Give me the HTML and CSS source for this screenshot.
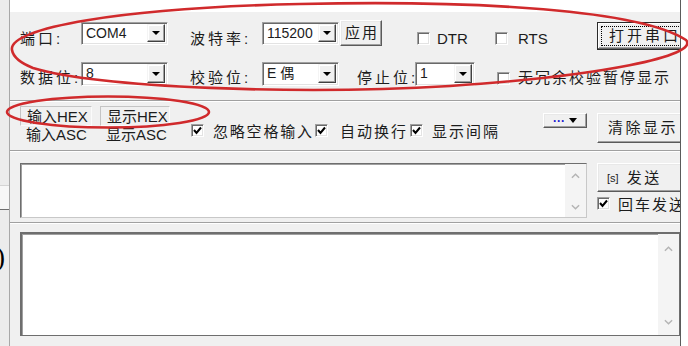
FILE: index.html
```html
<!DOCTYPE html>
<html>
<head>
<meta charset="utf-8">
<link rel="stylesheet" href="styles.css">
</head>
<body>
<div class="page">
  <div class="side">
    <div class="side-band"></div>
    <div class="paren">)</div>
  </div>
  <div class="win">
    <div class="topband"></div>

    <div class="row r1">
      <span class="lab w61">端口:</span>
      <div class="combo w87"><span class="val">COM4</span><span class="drop"><i></i></span></div>
      <span class="lab w72 ml22">波特率:</span>
      <div class="combo w77"><span class="val">115200</span><span class="drop"><i></i></span></div>
      <div class="btn apply">应用</div>
      <span class="chk ml35"></span>
      <span class="lat dtr">DTR</span>
      <span class="chk"></span>
      <span class="lat rts">RTS</span>
      <div class="btn open"><span class="focus">打开串口</span></div>
    </div>

    <div class="row r2">
      <span class="lab w61">数据位:</span>
      <div class="combo w87"><span class="val">8</span><span class="drop"><i></i></span></div>
      <span class="lab w72 ml22">校验位:</span>
      <div class="combo w77"><span class="val">E 偶</span><span class="drop"><i></i></span></div>
      <span class="lab w58 ml18">停止位:</span>
      <div class="combo w60"><span class="val">1</span><span class="drop"><i></i></span></div>
      <span class="chk ml22"></span>
      <span class="lab2 nocheck">无冗余校验暂停显示</span>
    </div>

    <div class="sep"></div>

    <div class="row r3">
      <div class="hexgrp">
        <div class="hexrow">
          <span class="hexbtn w72">输入HEX</span>
          <span class="hexbtn w70">显示HEX</span>
        </div>
        <div class="ascrow">
          <span class="asc1">输入ASC</span>
          <span>显示ASC</span>
        </div>
      </div>
      <span class="chk on"><svg viewBox="0 0 11 11"><polyline points="2,5 4.5,8 9,2.5"/></svg></span>
      <span class="lab2 opt1">忽略空格输入</span>
      <span class="chk on"><svg viewBox="0 0 11 11"><polyline points="2,5 4.5,8 9,2.5"/></svg></span>
      <span class="lab2 opt2">自动换行</span>
      <span class="chk on"><svg viewBox="0 0 11 11"><polyline points="2,5 4.5,8 9,2.5"/></svg></span>
      <span class="lab2 opt3">显示间隔</span>
      <div class="btn more"><span class="dots">···</span><i class="tri"></i></div>
      <div class="btn clear">清除显示</div>
    </div>

    <div class="sep"></div>

    <div class="row r4">
      <div class="textbox sendbox">
        <div class="area"></div>
        <div class="sbar">
          <svg viewBox="0 0 10 6"><polyline points="1,5 5,1 9,5"/></svg>
          <svg viewBox="0 0 10 6"><polyline points="1,1 5,5 9,1"/></svg>
        </div>
      </div>
      <div class="sendcol">
        <div class="btn send"><span class="hot">[s]</span>发送</div>
        <div class="crrow">
          <span class="chk on"><svg viewBox="0 0 11 11"><polyline points="2,5 4.5,8 9,2.5"/></svg></span>
          <span class="lab2 cr">回车发送</span>
        </div>
      </div>
    </div>

    <div class="sep sep2"></div>

    <div class="row r5">
      <div class="textbox recvbox">
        <div class="area"></div>
        <div class="sbar">
          <svg viewBox="0 0 10 6"><polyline points="1,5 5,1 9,5"/></svg>
          <svg viewBox="0 0 10 6"><polyline points="1,1 5,5 9,1"/></svg>
        </div>
      </div>
    </div>
  </div>
</div>

<svg class="marks" viewBox="0 0 688 346" width="688" height="346">
  <path d="M 12 50 C 8 28, 120 8, 300 4 C 480 0, 640 10, 686 40 C 700 56, 600 76, 450 86 C 300 95, 100 88, 33 68 C 18 62, 13 56, 12 50 Z"/>
  <ellipse cx="108" cy="112" rx="101" ry="15.5"/>
</svg>
</body>
</html>
```

FILE: styles.css
```css
* { box-sizing: border-box; }

body {
  margin: 0;
  width: 688px;
  height: 346px;
  overflow: hidden;
  background: #fff;
  position: relative;
  font-family: "Liberation Sans", "Noto Sans CJK SC", sans-serif;
  color: #1c1c1c;
}

.page {
  display: flex;
  height: 346px;
}

.side {
  width: 10px;
  background: #ececec;
  border-right: 1px solid #a8a8a8;
  overflow: hidden;
  display: flex;
  flex-direction: column;
}
.side-band {
  margin-top: 185px;
  height: 25px;
  background: #f7f7f7;
  border-top: 1px solid #d4d4d4;
  border-bottom: 1px solid #6e6e6e;
}
.paren {
  margin-top: 34px;
  margin-left: -4px;
  font-family: "Liberation Serif", serif;
  font-size: 27px;
  line-height: 27px;
  color: #000;
}

.win {
  width: 671px;
  background: #f0f0f0;
  border-right: 1px solid #5a5a5a;
  display: flex;
  flex-direction: column;
  overflow: hidden;
}
.topband {
  height: 12px;
  background: #fff;
  flex: none;
}

.row {
  display: flex;
  align-items: flex-start;
  padding-left: 10px;
  flex: none;
}
.r1 { height: 44px; }
.r2 { height: 44px; }
.r3 { height: 48px; }
.r4 { height: 66px; padding-top: 11px; }
.r5 { height: 104px; margin-top: 8px; }

.sep {
  height: 2px;
  border-top: 1px solid #a0a0a0;
  border-bottom: 1px solid #fff;
  flex: none;
}
.sep2 { margin-top: 4px; }

.lab {
  font-size: 15px;
  line-height: 16px;
  letter-spacing: 3px;
  white-space: nowrap;
  flex: none;
}
.lab2 {
  font-size: 15px;
  line-height: 16px;
  letter-spacing: 2px;
  white-space: nowrap;
  flex: none;
}
.lat {
  font-size: 15px;
  line-height: 16px;
  white-space: nowrap;
  flex: none;
}

.w58 { width: 58px; }
.w60 { width: 60px; }
.w61 { width: 61px; }
.w70 { width: 70px; }
.w72 { width: 72px; }
.w77 { width: 77px; }
.w87 { width: 87px; }
.ml18 { margin-left: 18px; }
.ml22 { margin-left: 22px; }
.ml35 { margin-left: 35px; }

/* combo boxes */
.combo {
  display: flex;
  background: #fff;
  border: 1px solid;
  border-color: #a0a0a0 #fff #fff #a0a0a0;
  box-shadow: inset 1px 1px 0 #696969, inset -1px -1px 0 #e3e3e3;
  padding: 1px 2px 2px 1px;
  flex: none;
}
.r1 .combo { margin-top: 10px; height: 23px; }
.r2 .combo { margin-top: 6px; height: 24px; }
.val {
  flex: 1;
  font-size: 14px;
  line-height: 18px;
  padding-left: 3px;
  white-space: nowrap;
  overflow: hidden;
}
.drop {
  width: 18px;
  flex: none;
  background: #f0f0f0;
  border: 1px solid;
  border-color: #f4f4f4 #404040 #404040 #f4f4f4;
  box-shadow: inset -1px -1px 0 #a0a0a0, inset 1px 1px 0 #fff;
  display: flex;
  align-items: center;
  justify-content: center;
}
.drop i {
  width: 0;
  height: 0;
  border-left: 4px solid transparent;
  border-right: 4px solid transparent;
  border-top: 4px solid #000;
}

/* checkboxes */
.chk {
  width: 13px;
  height: 13px;
  background: #fff;
  border: 1px solid;
  border-color: #a0a0a0 #fff #fff #a0a0a0;
  box-shadow: inset 1px 1px 0 #696969, inset -1px -1px 0 #e3e3e3;
  flex: none;
  display: flex;
}
.chk svg {
  width: 11px;
  height: 11px;
  fill: none;
  stroke: #000;
  stroke-width: 2;
}

/* buttons */
.btn {
  background: #f0f0f0;
  border: 1px solid;
  border-color: #fff #5a5a5a #5a5a5a #fff;
  box-shadow: inset -1px -1px 0 #a0a0a0, inset 1px 1px 0 #e8e8e8;
  font-size: 15px;
  line-height: 16px;
  letter-spacing: 2px;
  display: flex;
  align-items: center;
  justify-content: center;
  white-space: nowrap;
  flex: none;
}

/* row 1 positions */
.r1 .lab, .r1 .lat { margin-top: 19px; }
.r1 .chk { margin-top: 20px; }
.apply {
  margin-left: 1px;
  margin-top: 8px;
  width: 42px;
  height: 26px;
  padding-left: 2px;
}
.dtr { margin-left: 7px; width: 58px; }
.rts { margin-left: 10px; width: 79px; }
.open {
  margin-top: 10px;
  width: 90px;
  height: 28px;
  border: 1px solid #2a2a2a;
  box-shadow: inset -1px -1px 0 #696969, inset 1px 1px 0 #fff, inset -2px -2px 0 #a0a0a0;
  justify-content: flex-start;
  padding: 3px;
}
.focus {
  flex: 1;
  height: 100%;
  border: 1px dotted #000;
  padding-left: 7px;
  letter-spacing: 3px;
  display: flex;
  align-items: center;
}

/* row 2 positions */
.r2 .lab, .r2 .lab2 { margin-top: 14px; }
.r2 .chk { margin-top: 16px; }
.nocheck { margin-left: 8px; }

/* row 3 */
.hexgrp {
  width: 171px;
  flex: none;
  display: flex;
  flex-direction: column;
}
.hexrow {
  display: flex;
  margin-top: 4px;
}
.hexbtn {
  height: 20px;
  font-size: 15px;
  line-height: 16px;
  padding-top: 2px;
  padding-left: 6px;
  border: 1px solid;
  border-color: #c4c4c4 #fbfbfb #fbfbfb #c4c4c4;
  white-space: nowrap;
}
.hexbtn + .hexbtn { margin-left: 8px; }
.ascrow {
  display: flex;
  margin-top: 1px;
  padding-left: 6px;
  font-size: 15px;
  line-height: 16px;
  white-space: nowrap;
}
.asc1 { width: 80px; }
.r3 .chk { margin-top: 22px; }
.r3 .lab2 { margin-top: 22px; }
.opt1 { margin-left: 9px; width: 102px; letter-spacing: 1.8px; }
.opt2 { margin-left: 12px; width: 70px; }
.opt3 { margin-left: 9px; width: 111px; }
.more {
  margin-top: 11px;
  width: 44px;
  height: 15px;
  gap: 4px;
  letter-spacing: 0;
}
.dots {
  color: #1a1ad0;
  font-size: 12px;
  font-weight: bold;
  line-height: 10px;
}
.tri {
  width: 0;
  height: 0;
  border-left: 4px solid transparent;
  border-right: 4px solid transparent;
  border-top: 5px solid #000;
}
.clear {
  margin-left: 10px;
  margin-top: 11px;
  width: 90px;
  height: 30px;
  justify-content: flex-start;
  padding-left: 10px;
  letter-spacing: 2.5px;
}

/* text boxes */
.textbox {
  display: flex;
  background: #fff;
  border: 1px solid #6e6e6e;
  border-right-color: #c8c8c8;
  border-bottom-color: #c8c8c8;
  box-shadow: inset 1px 1px 0 #a0a0a0;
  flex: none;
}
.area { flex: 1; }
.sbar {
  width: 21px;
  background: #f4f4f4;
  display: flex;
  flex-direction: column;
  justify-content: space-between;
  align-items: center;
  padding: 9px 0 7px;
}
.sbar svg {
  width: 9px;
  height: 6px;
  fill: none;
  stroke: #b4b4b4;
  stroke-width: 1.6;
}
.sendbox {
  width: 567px;
  height: 55px;
}
.recvbox {
  flex: 1;
  height: 104px;
  border-color: #6e6e6e;
  border-top-width: 2px;
  border-left-width: 2px;
}
.recvbox .sbar { padding: 12px 0 10px; }

.sendcol {
  margin-left: 10px;
  display: flex;
  flex-direction: column;
  flex: none;
}
.send {
  width: 90px;
  height: 29px;
  justify-content: flex-start;
  padding-left: 9px;
  letter-spacing: 2.5px;
}
.hot {
  font-size: 11px;
  letter-spacing: 0;
  margin-right: 8px;
}
.crrow {
  display: flex;
  margin-top: 5px;
}
.cr { margin-left: 8px; margin-top: 0; }

.marks {
  position: absolute;
  left: 0;
  top: 0;
  pointer-events: none;
}
.marks path, .marks ellipse {
  fill: none;
  stroke: #d02a2c;
  stroke-width: 2.6;
}
```
